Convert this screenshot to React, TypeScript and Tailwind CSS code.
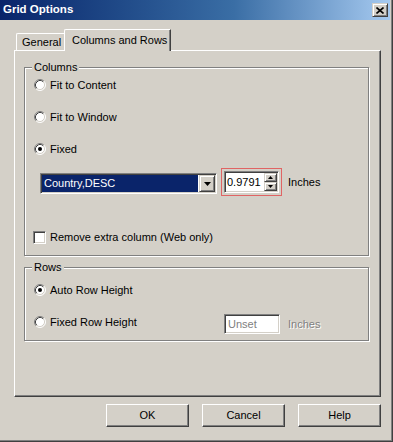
import React from 'react';

const raised =
  'border border-t-[#d4d0c8] border-l-[#d4d0c8] border-r-[#404040] border-b-[#404040] shadow-[inset_1px_1px_0_#ffffff,inset_-1px_-1px_0_#808080] bg-[#d4d0c8]';
const sunken =
  'border border-t-[#808080] border-l-[#808080] border-r-white border-b-white shadow-[inset_1px_1px_0_#404040,inset_-1px_-1px_0_#d4d0c8]';

function Radio({ checked }: { checked?: boolean }) {
  return (
    <svg width="12" height="12" viewBox="0 0 12 12" className="shrink-0">
      <circle cx="6" cy="6" r="5" fill="#ffffff" />
      <path d="M2.11 9.89 A5.5 5.5 0 0 1 9.89 2.11" stroke="#808080" fill="none" />
      <path d="M9.89 2.11 A5.5 5.5 0 0 1 2.11 9.89" stroke="#ffffff" fill="none" />
      <path d="M2.82 9.18 A4.5 4.5 0 0 1 9.18 2.82" stroke="#404040" fill="none" />
      <path d="M9.18 2.82 A4.5 4.5 0 0 1 2.82 9.18" stroke="#d4d0c8" fill="none" />
      {checked && <circle cx="6" cy="6" r="2" fill="#000000" />}
    </svg>
  );
}

function RadioRow({ label, checked }: { label: string; checked?: boolean }) {
  return (
    <div className="flex items-center h-[16px] gap-[4px]">
      <Radio checked={checked} />
      <span className="leading-[16px]">{label}</span>
    </div>
  );
}

function Group({ label, className, children }: { label: string; className: string; children: React.ReactNode }) {
  return (
    <div className={`relative border border-[#808080] shadow-[inset_1px_1px_0_#ffffff,1px_1px_0_#ffffff] ${className}`}>
      <span className="absolute -top-[7px] left-[7px] bg-[#d4d0c8] px-[2px] leading-[13px]">{label}</span>
      {children}
    </div>
  );
}

function Btn({ label }: { label: string }) {
  return (
    <div className="w-[83px] h-[23px] flex items-center justify-center border border-t-white border-l-white border-r-[#404040] border-b-[#404040] shadow-[inset_-1px_-1px_0_#808080]">
      {label}
    </div>
  );
}

export default function App() {
  return (
    <div className="w-[393px] h-[442px] border-r border-b border-[#404040] bg-[#d4d0c8] text-[11px] text-black font-['Liberation_Sans',Arial,sans-serif]">
      <div className="h-full border-r border-b border-[#808080] pr-px">
        {/* title bar */}
        <div className="h-[20px] flex items-center pl-[3px] pr-[2px] bg-gradient-to-r from-[#0a246a] via-[#3a6ea5] via-60% to-[#a6caf0]">
          <span className="text-white font-bold text-[11.5px]">Grid Options</span>
          <div className={`ml-auto w-[16px] h-[14px] flex items-center justify-center ${raised}`}>
            <svg width="8" height="7" viewBox="0 0 8 7">
              <path d="M0.5 0.5 L7.5 6.5 M7.5 0.5 L0.5 6.5" stroke="#000" strokeWidth="1.6" />
            </svg>
          </div>
        </div>

        <div className="pl-[14px] pt-[9px]">
          {/* tabs */}
          <div className="flex items-end h-[21px] pl-[2px]">
            <div className="h-[17px] w-[51px] pl-[5px] flex items-center whitespace-nowrap border-l border-t border-white border-r border-r-[#404040] rounded-tl-[2px]">
              General
            </div>
            <div className="relative z-10 -ml-[3px] -mb-px h-[22px] w-[107px] pl-[7px] flex items-center whitespace-nowrap bg-[#d4d0c8] border-l border-t border-white border-r border-r-[#404040] shadow-[inset_-1px_0_0_#808080] rounded-tl-[2px]">
              Columns and Rows
            </div>
          </div>

          {/* panel */}
          <div className="w-[367px] h-[347px] border-l border-t border-white border-r border-b border-r-[#404040] border-b-[#404040] shadow-[inset_-1px_-1px_0_#808080] pl-[9px] pt-[16px]">
            <Group label="Columns" className="w-[345px] h-[189px]">
              <div className="flex flex-col pt-[9px] pl-[9px]">
                <div className="flex flex-col gap-[16px]">
                  <RadioRow label="Fit to Content" />
                  <RadioRow label="Fit to Window" />
                  <RadioRow label="Fixed" checked />
                </div>

                <div className="flex items-start mt-[11px] h-[28px] pl-[6px]">
                  <div className={`mt-[5px] w-[177px] h-[21px] flex bg-white ${sunken} p-px`}>
                    <div className="flex-1 bg-[#0a246a] text-white pl-[2px] leading-[17px] mr-px">Country,DESC</div>
                    <div className={`w-[16px] h-[17px] flex items-center justify-center ${raised}`}>
                      <svg width="7" height="4" viewBox="0 0 7 4">
                        <path d="M0 0h7l-3.5 4z" fill="#000" />
                      </svg>
                    </div>
                  </div>
                  <div className="ml-[4px] w-[61px] h-[28px] border border-[#e06464] p-[2px]">
                    <div className={`h-[22px] flex bg-white ${sunken} p-px`}>
                      <span className="flex-1 pl-px leading-[18px]">0.9791</span>
                      <div className="flex flex-col w-[13px]">
                        <div className={`h-[9px] flex items-center justify-center ${raised}`}>
                          <svg width="5" height="3" viewBox="0 0 5 3">
                            <path d="M0 3h5l-2.5-3z" fill="#000" />
                          </svg>
                        </div>
                        <div className={`h-[9px] flex items-center justify-center ${raised}`}>
                          <svg width="5" height="3" viewBox="0 0 5 3">
                            <path d="M0 0h5l-2.5 3z" fill="#000" />
                          </svg>
                        </div>
                      </div>
                    </div>
                  </div>
                  <span className="ml-[6px] self-center">Inches</span>
                </div>

                <div className="flex items-center mt-[35px] h-[13px] -ml-px gap-[4px]">
                  <div className={`w-[13px] h-[13px] bg-white ${sunken}`} />
                  <span>Remove extra column (Web only)</span>
                </div>
              </div>
            </Group>

            <Group label="Rows" className="w-[345px] h-[74px] mt-[11px]">
              <div className="flex flex-col pt-[14px] pl-[9px]">
                <RadioRow label="Auto Row Height" checked />
                <div className="flex items-start mt-[14px] h-[22px]">
                  <div className="w-[190px] h-[20px] flex items-center gap-[4px]">
                    <Radio />
                    <span>Fixed Row Height</span>
                  </div>
                  <div className={`mt-[2px] w-[56px] h-[20px] bg-white ${sunken} pl-[3px] leading-[18px] text-[#808080]`}>
                    Unset
                  </div>
                  <span className="mt-[2px] ml-[8px] leading-[20px] text-[#808080] [text-shadow:1px_1px_0_#ffffff]">Inches</span>
                </div>
              </div>
            </Group>
          </div>

          {/* buttons */}
          <div className="w-[367px] flex justify-end gap-[13px] mt-[7px]">
            <Btn label="OK" />
            <Btn label="Cancel" />
            <Btn label="Help" />
          </div>
        </div>
      </div>
    </div>
  );
}
